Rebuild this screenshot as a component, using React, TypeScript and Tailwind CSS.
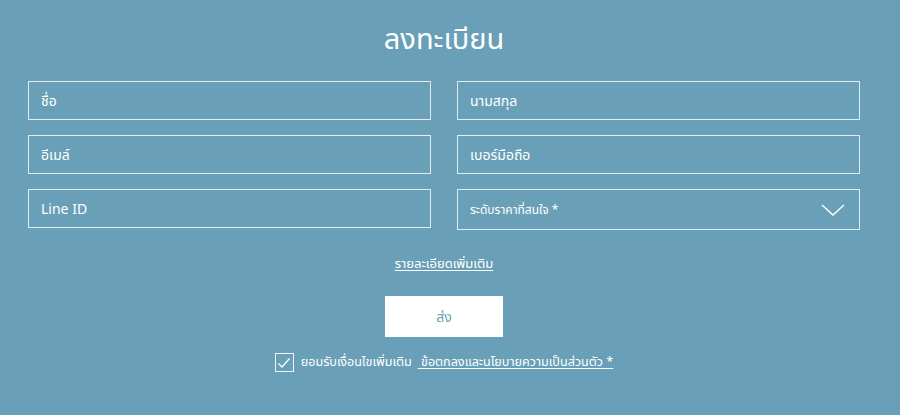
function Field({ label }: { label: string }) {
  return (
    <div className="flex h-[39px] items-center border border-white/80 px-[12px] text-[14px] text-white">
      {label}
    </div>
  );
}

export default function App() {
  return (
    <div
      className="h-[415px] w-[900px] bg-[#69a0b7] pl-[28px] pr-[40px] pt-[16px] text-white"
      style={{ fontFamily: '"Noto Sans", "Noto Sans Thai", sans-serif' }}
    >
      <h1 className="text-center text-[29px] leading-[44px] font-normal">ลงทะเบียน</h1>

      <div className="mt-[21px] grid grid-cols-2 gap-x-[26px] gap-y-[15px]">
        <Field label="ชื่อ" />
        <Field label="นามสกุล" />
        <Field label="อีเมล์" />
        <Field label="เบอร์มือถือ" />
        <Field label="Line ID" />
        <div className="flex h-[41px] items-center justify-between border border-white/80 pl-[12px] pr-[14px] text-[12px]">
          <span>ระดับราคาที่สนใจ *</span>
          <svg width="24" height="12" viewBox="0 0 24 12" fill="none" stroke="white" strokeWidth="1.4">
            <path d="M1 1 L12 11 L23 1" />
          </svg>
        </div>
      </div>

      <div className="mt-[20px] text-center">
        <a href="#" className="text-[13px] underline underline-offset-2">
          รายละเอียดเพิ่มเติม
        </a>
      </div>

      <div className="mt-[22px] flex justify-center">
        <button
          type="button"
          className="flex h-[41px] w-[118px] items-center justify-center bg-white text-[14px] text-[#6a9fb6]"
        >
          ส่ง
        </button>
      </div>

      <div className="mt-[16px] flex items-center justify-center text-[12.6px]">
        <span className="mr-[7px] flex h-[19px] w-[19px] items-center justify-center border border-white/90">
          <svg width="14" height="12" viewBox="0 0 14 12" fill="none" stroke="white" strokeWidth="1.3">
            <path d="M1.5 6.5 L5 10 L12.5 1.5" />
          </svg>
        </span>
        <span>ยอมรับเงื่อนไขเพิ่มเติม</span>
        <a href="#" className="ml-[6px] underline underline-offset-2">
          &nbsp;ข้อตกลงและนโยบายความเป็นส่วนตัว *
        </a>
      </div>
    </div>
  );
}
